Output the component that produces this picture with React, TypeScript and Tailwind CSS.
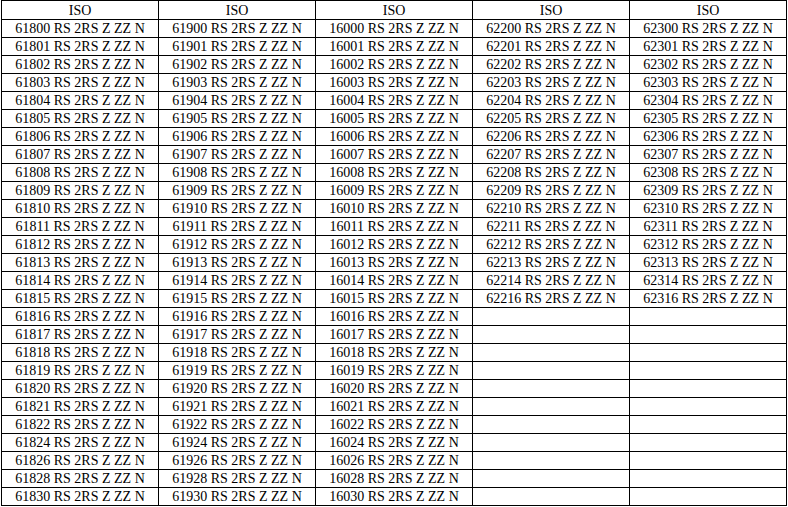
import React from "react";

const suffix = " RS 2RS Z ZZ N";

const col1 = [
  ...Array.from({ length: 23 }, (_, i) => 61800 + i),
  61824, 61826, 61828, 61830,
];
const col2 = [
  ...Array.from({ length: 23 }, (_, i) => 61900 + i),
  61924, 61926, 61928, 61930,
];
const col3 = [
  ...Array.from({ length: 23 }, (_, i) => 16000 + i),
  16024, 16026, 16028, 16030,
];
const col4 = [...Array.from({ length: 15 }, (_, i) => 62200 + i), 62216];
const col5 = [...Array.from({ length: 15 }, (_, i) => 62300 + i), 62316];

const columns = [col1, col2, col3, col4, col5];

export default function App() {
  const rows = Array.from({ length: 27 }, (_, r) => r);
  return (
    <div className="w-[788px] h-[507px] bg-white pl-px">
      <table
        className="border-collapse text-[14px] leading-[17px] text-black"
        style={{ fontFamily: '"Liberation Serif", "Times New Roman", serif' }}
      >
        <thead>
          <tr>
            {columns.map((_, i) => (
              <th
                key={i}
                className="border border-black w-[157px] h-[19px] p-0 font-normal text-center"
              >
                ISO
              </th>
            ))}
          </tr>
        </thead>
        <tbody>
          {rows.map((r) => (
            <tr key={r}>
              {columns.map((col, c) => (
                <td
                  key={c}
                  className="border border-black w-[157px] h-[18px] p-0 text-center whitespace-nowrap"
                >
                  {col[r] !== undefined ? `${col[r]}${suffix}` : ""}
                </td>
              ))}
            </tr>
          ))}
        </tbody>
      </table>
    </div>
  );
}
